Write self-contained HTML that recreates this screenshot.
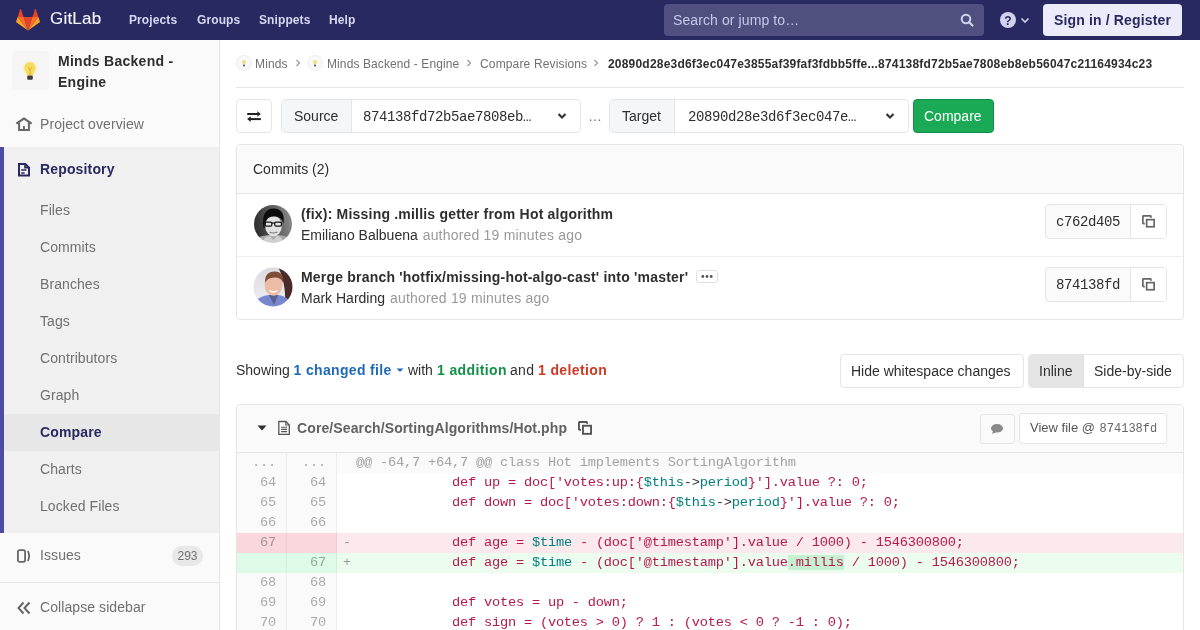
<!DOCTYPE html>
<html><head><meta charset="utf-8">
<style>
*{box-sizing:border-box;margin:0;padding:0}
html,body{width:1200px;height:630px;overflow:hidden;background:#fff}
body{filter:grayscale(0);font-family:"Liberation Sans",sans-serif;font-size:14px;line-height:20px;color:#2e2e2e;position:relative}
.m{font-family:"Liberation Mono",monospace}
.a{position:absolute;white-space:pre}
b,.b{font-weight:bold;letter-spacing:0.15px}
/* header */
#hdr{position:absolute;left:0;top:0;width:1200px;height:40px;background:#292961}
.nav{position:absolute;top:10px;font-weight:bold;color:#d7d7f2;font-size:12px;line-height:20px;letter-spacing:0.1px}
#search{position:absolute;left:664px;top:4px;width:320px;height:32px;background:#4f4f80;border-radius:4px}
#signin{position:absolute;left:1043px;top:4px;width:139px;height:32px;background:#ebebf9;border-radius:4px}
/* sidebar */
#side{position:absolute;left:0;top:40px;width:220px;height:590px;background:#fafafa;border-right:1px solid #e5e5e5}
.si{position:absolute;left:40px;color:#707070;letter-spacing:0.08px}
#repo{position:absolute;left:0;top:147px;width:219px;height:386px;background:#f0f0f0}
#bar{position:absolute;left:0;top:147px;width:4px;height:386px;background:#4b4ba3}
#act{position:absolute;left:4px;top:414px;width:215px;height:37px;background:#e7e7e7}
/* main */
.box{position:absolute;border:1px solid #e5e5e5;border-radius:4px;background:#fff}
.code{position:absolute;left:337px;width:846px;height:20px;font-family:"Liberation Mono",monospace;font-size:13.66px;letter-spacing:-0.2px;line-height:20px;white-space:pre;color:#b5194d}
.ln{position:absolute;width:50px;height:20px;font-family:"Liberation Mono",monospace;font-size:13.66px;letter-spacing:-0.2px;line-height:20px;text-align:right;padding-right:10px;color:rgba(0,0,0,0.33);background:#fafafa;border-right:1px solid rgba(0,0,0,0.05)}
.t{color:#008080}
.o{color:#333}
</style></head><body>
<div id="hdr">
  <svg style="position:absolute;left:16px;top:9px" width="24" height="22" viewBox="0 0 24 22">
    <path d="M12 21.6 L16.4 8 H7.6 Z" fill="#e24329"/>
    <path d="M12 21.6 L7.6 8 H1.6 Z" fill="#fc6d26"/>
    <path d="M1.6 8 L0.2 12.2 c-.15.45 0 .9.4 1.2 L12 21.6 Z" fill="#fca326"/>
    <path d="M1.6 8 H7.6 L5 .3 c-.15-.4-.65-.4-.8 0 Z" fill="#e24329"/>
    <path d="M12 21.6 L16.4 8 H22.4 Z" fill="#fc6d26"/>
    <path d="M22.4 8 L23.8 12.2 c.15.45 0 .9-.4 1.2 L12 21.6 Z" fill="#fca326"/>
    <path d="M22.4 8 H16.4 L19 .3 c.15-.4.65-.4.8 0 Z" fill="#e24329"/>
  </svg>
  <div class="a" style="left:50px;top:7px;font-size:17px;line-height:24px;color:#f5f5fd;-webkit-text-stroke:0.1px #f5f5fd;letter-spacing:0.2px">GitLab</div>
  <div class="nav" style="left:129px">Projects</div>
  <div class="nav" style="left:197px">Groups</div>
  <div class="nav" style="left:259px">Snippets</div>
  <div class="nav" style="left:329px">Help</div>
  <div id="search"></div>
  <div class="a" style="left:673px;top:10px;color:#c8c8e8;letter-spacing:0.1px">Search or jump to…</div>
  <svg style="position:absolute;left:960px;top:13px" width="14" height="14" viewBox="0 0 14 14"><circle cx="6" cy="6" r="4.3" fill="none" stroke="#d1d1f0" stroke-width="2"/><path d="M9 9 L12.5 12.5" stroke="#d1d1f0" stroke-width="2.2" stroke-linecap="round"/></svg>
  <svg style="position:absolute;left:1000px;top:12px" width="32" height="16" viewBox="0 0 32 16"><circle cx="8" cy="8" r="8" fill="#d1d1f0"/><text x="8" y="12.5" font-family="Liberation Sans" font-weight="bold" font-size="12" fill="#292961" text-anchor="middle">?</text><path d="M21.5 6.5 L25 10 L28.5 6.5" fill="none" stroke="#d1d1f0" stroke-width="1.6"/></svg>
  <div id="signin"></div>
  <div class="a b" style="left:1054px;top:10px;color:#292961">Sign in / Register</div>
</div>

<div id="side">
</div>
<!-- sidebar contents (page coordinates) -->
<div class="a" style="left:12px;top:51px;width:37px;height:39px;background:#f5f5f5;border-radius:4px"></div>
<svg style="position:absolute;left:22px;top:60px" width="16" height="22" viewBox="0 0 16 22"><circle cx="8" cy="8.5" r="7.5" fill="#fbf1c4" opacity=".7"/><path d="M8 2.3 C5 2.3 2.3 4.5 2.3 7.8 C2.3 10.8 4.6 12.3 5 15.6 L11 15.6 C11.4 12.3 13.7 10.8 13.7 7.8 C13.7 4.5 11 2.3 8 2.3 Z" fill="#f3dc5e"/><path d="M6 7 L8 10 L10 7 M8 10 V15" stroke="#e2a91c" stroke-width=".9" fill="none"/><rect x="5.2" y="15.6" width="5.6" height="4.2" rx="1.2" fill="#3d3d3d"/></svg>
<div class="a b" style="left:58px;top:51px;line-height:21px;color:#2e2e2e;letter-spacing:0.28px">Minds Backend -
Engine</div>

<svg style="position:absolute;left:12px;top:112px" width="24" height="24" viewBox="0 0 24 24"><path d="M4.3 11.6 L12 6.6 L19.7 11.6" fill="none" stroke="#666" stroke-width="2.1" stroke-linejoin="miter"/><path d="M7.1 10.3 V17.9 H16.9 V10.3" fill="none" stroke="#666" stroke-width="2"/><rect x="11" y="14" width="1.9" height="4" fill="#666"/></svg>
<div class="si" style="top:114px">Project overview</div>

<div id="repo"></div>
<div id="bar"></div>
<svg style="position:absolute;left:12px;top:157px" width="24" height="24" viewBox="0 0 24 24"><path d="M7 7 H13.3 L17 10.7 V18.6 H7 Z" fill="none" stroke="#292961" stroke-width="2"/><path d="M13 7 V10.8 H17" fill="none" stroke="#292961" stroke-width="1.6"/><path d="M9.2 13 H14.4 M9.2 16 H12.6" stroke="#292961" stroke-width="1.6"/></svg>
<div class="a b" style="left:40px;top:159px;color:#292961">Repository</div>
<div class="si" style="top:200px">Files</div>
<div class="si" style="top:237px">Commits</div>
<div class="si" style="top:274px">Branches</div>
<div class="si" style="top:311px">Tags</div>
<div class="si" style="top:348px">Contributors</div>
<div class="si" style="top:385px">Graph</div>
<div id="act"></div>
<div class="a b" style="left:40px;top:422px;color:#292961">Compare</div>
<div class="si" style="top:459px">Charts</div>
<div class="si" style="top:496px">Locked Files</div>

<svg style="position:absolute;left:16px;top:548px" width="16" height="16" viewBox="0 0 16 16"><rect x="1.9" y="2.2" width="7.2" height="11.6" rx="1.8" fill="none" stroke="#666" stroke-width="1.8"/><path d="M11.7 3 C13.6 5.5 13.6 10.5 11.7 13" fill="none" stroke="#666" stroke-width="1.8"/></svg>
<div class="si" style="top:545px">Issues</div>
<div class="a" style="left:172px;top:546px;width:31px;height:20px;border-radius:10px;background:#e8e8e8;color:#707070;font-size:12px;line-height:20px;text-align:center">293</div>
<div class="a" style="left:0;top:582px;width:219px;height:1px;background:#e5e5e5"></div>
<svg style="position:absolute;left:17px;top:601px" width="14" height="14" viewBox="0 0 14 14"><path d="M6.5 1.5 L1.5 7 L6.5 12.5 M12.5 1.5 L7.5 7 L12.5 12.5" fill="none" stroke="#666" stroke-width="2"/></svg>
<div class="si" style="top:597px">Collapse sidebar</div>

<!-- breadcrumbs -->
<svg style="position:absolute;left:236px;top:55px" width="16" height="16" viewBox="0 0 16 16"><circle cx="8" cy="8" r="7.5" fill="#f8f8f8" stroke="#eee"/><path d="M8 5 C6.7 5 5.9 5.9 5.9 6.9 C5.9 7.9 6.8 8.5 7 9.4 H9 C9.2 8.5 10.1 7.9 10.1 6.9 C10.1 5.9 9.3 5 8 5Z" fill="#efe08a"/><rect x="7" y="9.6" width="2" height="1.8" fill="#666"/></svg>
<div class="a" style="left:255px;top:54px;font-size:12px;color:#707070;letter-spacing:0.15px">Minds</div>
<svg style="position:absolute;left:294px;top:58px" width="8" height="10" viewBox="0 0 8 10"><path d="M2.5 2 L5.5 5 L2.5 8" fill="none" stroke="#999" stroke-width="1.2"/></svg>
<svg style="position:absolute;left:307px;top:55px" width="16" height="16" viewBox="0 0 16 16"><circle cx="8" cy="8" r="7.5" fill="#f8f8f8" stroke="#eee"/><path d="M8 5 C6.7 5 5.9 5.9 5.9 6.9 C5.9 7.9 6.8 8.5 7 9.4 H9 C9.2 8.5 10.1 7.9 10.1 6.9 C10.1 5.9 9.3 5 8 5Z" fill="#efe08a"/><rect x="7" y="9.6" width="2" height="1.8" fill="#666"/></svg>
<div class="a" style="left:327px;top:54px;font-size:12px;color:#707070;letter-spacing:0.1px">Minds Backend - Engine</div>
<svg style="position:absolute;left:465px;top:58px" width="8" height="10" viewBox="0 0 8 10"><path d="M2.5 2 L5.5 5 L2.5 8" fill="none" stroke="#999" stroke-width="1.2"/></svg>
<div class="a" style="left:480px;top:54px;font-size:12px;color:#707070;letter-spacing:0.15px">Compare Revisions</div>
<svg style="position:absolute;left:592px;top:58px" width="8" height="10" viewBox="0 0 8 10"><path d="M2.5 2 L5.5 5 L2.5 8" fill="none" stroke="#999" stroke-width="1.2"/></svg>
<div class="a" style="left:608px;top:54px;font-size:12px;font-weight:bold;color:#2e2e2e;letter-spacing:0.2px">20890d28e3d6f3ec047e3855af39faf3fdbb5ffe...874138fd72b5ae7808eb8eb56047c21164934c23</div>
<div class="a" style="left:236px;top:87px;width:948px;height:1px;background:#e5e5e5"></div>

<!-- compare form -->
<div class="box" style="left:236px;top:99px;width:36px;height:34px"></div>
<svg style="position:absolute;left:246px;top:110px" width="16" height="14" viewBox="0 0 16 14"><path d="M1.2 4 H12.5" stroke="#222" stroke-width="2"/><path d="M11.3 1.2 L14.9 4 L11.3 6.8 Z" fill="#222"/><path d="M3.5 9.1 H14.9" stroke="#222" stroke-width="2"/><path d="M4.7 6.3 L1.1 9.1 L4.7 11.9 Z" fill="#222"/></svg>

<div class="box" style="left:281px;top:99px;width:300px;height:34px"></div>
<div class="a" style="left:282px;top:100px;width:70px;height:32px;background:#f5f6f8;border-right:1px solid #e5e5e5;border-radius:3px 0 0 3px"></div>
<div class="a" style="left:294px;top:106px">Source</div>
<div class="a m" style="left:363px;top:107px;font-size:14px;letter-spacing:-0.4px">874138fd72b5ae7808eb…</div>
<svg style="position:absolute;left:556px;top:111px" width="12" height="10" viewBox="0 0 12 10"><path d="M2.5 3 L6 6.5 L9.5 3" fill="none" stroke="#2e2e2e" stroke-width="2"/></svg>
<div class="a" style="left:588px;top:106px;color:#707070">…</div>

<div class="box" style="left:609px;top:99px;width:300px;height:34px"></div>
<div class="a" style="left:610px;top:100px;width:65px;height:32px;background:#f5f6f8;border-right:1px solid #e5e5e5;border-radius:3px 0 0 3px"></div>
<div class="a" style="left:622px;top:106px">Target</div>
<div class="a m" style="left:688px;top:107px;font-size:14px;letter-spacing:-0.4px">20890d28e3d6f3ec047e…</div>
<svg style="position:absolute;left:884px;top:111px" width="12" height="10" viewBox="0 0 12 10"><path d="M2.5 3 L6 6.5 L9.5 3" fill="none" stroke="#2e2e2e" stroke-width="2"/></svg>

<div class="a" style="left:913px;top:99px;width:81px;height:34px;background:#1aaa55;border:1px solid #168f48;border-radius:4px"></div>
<div class="a" style="left:924px;top:106px;color:#fff">Compare</div>

<!-- commits panel -->
<div class="box" style="left:236px;top:144px;width:948px;height:176px;overflow:hidden">
  <div style="position:absolute;left:0;top:0;width:946px;height:49px;background:#fafafa;border-bottom:1px solid #e5e5e5"></div>
  <div style="position:absolute;left:0;top:111px;width:946px;height:1px;background:#f0f0f0"></div>
</div>
<div class="a" style="left:253px;top:159px">Commits (2)</div>

<svg style="position:absolute;left:254px;top:205px" width="38" height="38" viewBox="0 0 38 38">
  <defs><clipPath id="c1"><circle cx="19" cy="19" r="19"/></clipPath>
  <linearGradient id="g1" x1="0" y1="0.2" x2="1" y2="0"><stop offset="0" stop-color="#2e2e2e"/><stop offset="0.45" stop-color="#5a5a5a"/><stop offset="1" stop-color="#9a9a9a"/></linearGradient>
  <filter id="bl1" x="-10%" y="-10%" width="120%" height="120%"><feGaussianBlur stdDeviation="0.45"/></filter></defs>
  <g clip-path="url(#c1)"><g filter="url(#bl1)">
    <rect x="-2" y="-2" width="42" height="42" fill="url(#g1)"/>
    <path d="M-2 40 C1 32 8 30 19 30 C30 30 37 31 40 40 Z" fill="#a8a8a8"/>
    <path d="M8 40 C9 34 12 31 16 31 L19 35 L23 31 C26 31 29 33 30 40 Z" fill="#cfcfcf"/>
    <ellipse cx="19.5" cy="21" rx="8.3" ry="10.3" fill="#e2e2e2"/>
    <path d="M9.5 23 C7.5 10 11.5 3.5 19.5 3.5 C27.5 3.5 31 9 29.5 19 C28.5 14 26 11.5 19.5 11.5 C13.5 11.5 11 15 10.5 23 Z" fill="#111"/>
    <rect x="11.2" y="17" width="6.6" height="4.2" rx="1.2" fill="none" stroke="#151515" stroke-width="1.25"/>
    <rect x="20.8" y="17" width="6.6" height="4.2" rx="1.2" fill="none" stroke="#151515" stroke-width="1.25"/>
    <path d="M18 18 H20.8" stroke="#151515" stroke-width="1.3"/>
    <path d="M15.5 27 Q19.5 29 23.5 27" fill="none" stroke="#7a7a7a" stroke-width="1.1"/>
  </g></g>
</svg>
<div class="a b" style="left:301px;top:204px;letter-spacing:0.2px">(fix): Missing .millis getter from Hot algorithm</div>
<div class="a" style="left:301px;top:225px">Emiliano Balbuena <span style="color:#999;letter-spacing:0.2px;margin-left:1px">authored 19 minutes ago</span></div>

<svg style="position:absolute;left:253px;top:267px" width="40" height="40" viewBox="0 0 40 40">
  <defs><clipPath id="c2"><circle cx="20" cy="20" r="19.5"/></clipPath>
  <linearGradient id="g2" x1="0" y1="0" x2="0" y2="1"><stop offset="0" stop-color="#d9d9de"/><stop offset="1" stop-color="#f2f2f5"/></linearGradient>
  <filter id="bl2" x="-10%" y="-10%" width="120%" height="120%"><feGaussianBlur stdDeviation="0.5"/></filter></defs>
  <g clip-path="url(#c2)"><g filter="url(#bl2)">
    <rect x="-2" y="-2" width="44" height="44" fill="url(#g2)"/>
    <path d="M24 -2 H42 V36 H32 C33 24 30 8 24 -2 Z" fill="#4d2a2c"/>
    <path d="M0 42 C1 33 7 28 20 27.5 C32 28 37 31 39 42 Z" fill="#7888cf"/>
    <path d="M16 28 L21 38 L25 28 Z" fill="#55608f"/>
    <ellipse cx="20.5" cy="18.5" rx="9" ry="10.2" fill="#ebbca6"/>
    <path d="M12.2 16 C11.5 8 15.5 4.5 21.5 4.5 C28 4.5 31 8.5 30 16 C28.5 11.5 25 10.5 21.5 10.5 C17 10.7 14 12 12.2 16 Z" fill="#7f4d38"/>
    <path d="M16.5 23.5 Q20.5 26.5 24.5 23.5" fill="none" stroke="#fff" stroke-width="1.3"/>
  </g></g>
</svg>
<div class="a b" style="left:301px;top:267px;letter-spacing:0.2px">Merge branch 'hotfix/missing-hot-algo-cast' into 'master'</div>
<div class="a" style="left:696px;top:270px;width:22px;height:13px;border:1px solid #dfdfdf;border-radius:3px;background:#fff"></div>
<svg style="position:absolute;left:700px;top:274px" width="14" height="5" viewBox="0 0 14 5"><circle cx="2.8" cy="2.5" r="1.4" fill="#555"/><circle cx="7" cy="2.5" r="1.4" fill="#555"/><circle cx="11.2" cy="2.5" r="1.4" fill="#555"/></svg>
<div class="a" style="left:301px;top:288px">Mark Harding <span style="color:#999;letter-spacing:0.2px;margin-left:1px">authored 19 minutes ago</span></div>

<!-- sha buttons -->
<div class="a" style="left:1045px;top:204px;width:122px;height:35px;border:1px solid #e5e5e5;border-radius:4px;background:#fafafa"></div>
<div class="a" style="left:1130px;top:205px;width:36px;height:33px;background:#fff;border-left:1px solid #e5e5e5;border-radius:0 3px 3px 0"></div>
<div class="a m" style="left:1056px;top:212px;font-size:14px;letter-spacing:-0.4px">c762d405</div>
<svg style="position:absolute;left:1139.80px;top:213.20px" width="20" height="20" viewBox="0 0 20 20"><rect x="2.85" y="2.85" width="8.10" height="7.70" rx="0.6" fill="none" stroke="#666" stroke-width="1.7"/><rect x="4.80" y="4.80" width="11.20" height="10.80" fill="#fff"/><rect x="6.65" y="6.65" width="7.50" height="7.10" fill="none" stroke="#666" stroke-width="1.7"/></svg>
<div class="a" style="left:1045px;top:267px;width:122px;height:35px;border:1px solid #e5e5e5;border-radius:4px;background:#fafafa"></div>
<div class="a" style="left:1130px;top:268px;width:36px;height:33px;background:#fff;border-left:1px solid #e5e5e5;border-radius:0 3px 3px 0"></div>
<div class="a m" style="left:1056px;top:275px;font-size:14px;letter-spacing:-0.4px">874138fd</div>
<svg style="position:absolute;left:1139.80px;top:276.20px" width="20" height="20" viewBox="0 0 20 20"><rect x="2.85" y="2.85" width="8.10" height="7.70" rx="0.6" fill="none" stroke="#666" stroke-width="1.7"/><rect x="4.80" y="4.80" width="11.20" height="10.80" fill="#fff"/><rect x="6.65" y="6.65" width="7.50" height="7.10" fill="none" stroke="#666" stroke-width="1.7"/></svg>

<!-- showing -->
<div class="a" style="left:236px;top:360px">Showing <span class="b" style="color:#1e6ab9;letter-spacing:0.33px">1 changed file</span></div>
<svg style="position:absolute;left:395px;top:366px" width="10" height="8" viewBox="0 0 10 8"><path d="M1.5 2.5 H8.5 L5 6 Z" fill="#1e6ab9"/></svg>
<div class="a" style="left:408px;top:360px">with</div>
<div class="a b" style="left:437px;top:360px;color:#168f48;letter-spacing:0.38px">1 addition</div>
<div class="a" style="left:510px;top:360px;letter-spacing:0.3px">and</div>
<div class="a b" style="left:538px;top:360px;color:#cf3a24;letter-spacing:0.38px">1 deletion</div>

<div class="box" style="left:840px;top:354px;width:184px;height:34px"></div>
<div class="a" style="left:851px;top:361px">Hide whitespace changes</div>
<div class="box" style="left:1028px;top:354px;width:156px;height:34px;overflow:hidden"><div style="position:absolute;left:0;top:0;width:55px;height:32px;background:#e5e5e5;border-right:1px solid #e0e0e0"></div></div>
<div class="a" style="left:1039px;top:361px">Inline</div>
<div class="a" style="left:1094px;top:361px">Side-by-side</div>

<!-- diff file -->
<div class="box" style="left:236px;top:404px;width:948px;height:240px;overflow:hidden">
  <div style="position:absolute;left:0;top:0;width:946px;height:48px;background:#fafafa;border-bottom:1px solid #e5e5e5"></div>
</div>
<svg style="position:absolute;left:256px;top:423px" width="12" height="10" viewBox="0 0 12 10"><path d="M1.5 2.5 H10.5 L6 7.5 Z" fill="#2e2e2e"/></svg>
<svg style="position:absolute;left:276px;top:419px" width="16" height="18" viewBox="0 0 16 18"><path d="M2.8 2.5 H9.8 L13.3 6 V15.3 H2.8 Z" fill="none" stroke="#555" stroke-width="1.3"/><path d="M9.8 2.5 V6 H13.3" fill="none" stroke="#555" stroke-width="1.1"/><path d="M5.1 8.2 H11.1 M5.1 10.4 H11.1 M5.1 12.6 H11.1" stroke="#555" stroke-width="1.1"/></svg>
<div class="a b" style="left:297px;top:418px;color:#626262;letter-spacing:0.11px">Core/Search/SortingAlgorithms/Hot.php</div>
<svg style="position:absolute;left:576.00px;top:419.10px" width="20" height="20" viewBox="0 0 20 20"><rect x="2.95" y="2.95" width="8.10" height="7.90" rx="0.6" fill="none" stroke="#555" stroke-width="1.9"/><rect x="5.00" y="4.80" width="12.00" height="12.00" fill="#fafafa"/><rect x="6.95" y="6.75" width="8.10" height="8.10" fill="none" stroke="#555" stroke-width="1.9"/></svg>

<div class="a" style="left:980px;top:414px;width:35px;height:30px;border:1px solid #e5e5e5;border-radius:3px;background:#fafafa"></div>
<svg style="position:absolute;left:989px;top:421px" width="16" height="16" viewBox="0 0 16 16"><ellipse cx="8" cy="7.3" rx="6" ry="4.3" fill="#8a8a8a"/><path d="M4 10 L3.2 13 L7.5 11 Z" fill="#8a8a8a"/></svg>
<div class="a" style="left:1019px;top:413px;width:148px;height:31px;border:1px solid #e5e5e5;border-radius:3px;background:#fff"></div>
<div class="a" style="left:1030px;top:418px;font-size:13px;color:#555">View file @ <span class="m" style="font-size:12px;color:#666;margin-left:1px">874138fd</span></div>

<!-- diff lines -->
<div class="a" style="left:237px;top:453px;width:946px;height:177px;overflow:hidden">
<div class="ln" style="left:0;top:0px;background:#fafafa">...</div>
<div class="ln" style="left:50px;top:0px;background:#fafafa">...</div>
<div class="code" style="left:100px;top:0px;background:#fafafa;color:#a3a3a3;padding-left:19px">@@ -64,7 +64,7 @@ class Hot implements SortingAlgorithm</div>
<div class="ln" style="left:0;top:20px;background:#fafafa">64</div>
<div class="ln" style="left:50px;top:20px;background:#fafafa">64</div>
<div class="code" style="left:100px;top:20px;background:#fff;padding-left:19px">            def up = doc['votes:up:{<span class="t">$this</span><span class="o">-&gt;</span><span class="t">period</span>}'].value ?: 0;</div>
<div class="ln" style="left:0;top:40px;background:#fafafa">65</div>
<div class="ln" style="left:50px;top:40px;background:#fafafa">65</div>
<div class="code" style="left:100px;top:40px;background:#fff;padding-left:19px">            def down = doc['votes:down:{<span class="t">$this</span><span class="o">-&gt;</span><span class="t">period</span>}'].value ?: 0;</div>
<div class="ln" style="left:0;top:60px;background:#fafafa">66</div>
<div class="ln" style="left:50px;top:60px;background:#fafafa">66</div>
<div class="code" style="left:100px;top:60px;background:#fff;padding-left:19px"></div>
<div class="ln" style="left:0;top:80px;background:#f9d7dc">67</div>
<div class="ln" style="left:50px;top:80px;background:#f9d7dc"></div>
<div class="code" style="left:100px;top:80px;background:#fbe9eb;padding-left:19px">            def age = <span class="t">$time</span> - (doc['@timestamp'].value / 1000) - 1546300800;</div>
<div class="a m" style="left:106px;top:80px;font-size:13.33px;color:#999">-</div>
<div class="ln" style="left:0;top:100px;background:#ddfbe6"></div>
<div class="ln" style="left:50px;top:100px;background:#ddfbe6">67</div>
<div class="code" style="left:100px;top:100px;background:#ecfdf0;padding-left:19px">            def age = <span class="t">$time</span> - (doc['@timestamp'].value<span style="background:#c7f0d2">.millis</span> / 1000) - 1546300800;</div>
<div class="a m" style="left:106px;top:100px;font-size:13.33px;color:#999">+</div>
<div class="ln" style="left:0;top:120px;background:#fafafa">68</div>
<div class="ln" style="left:50px;top:120px;background:#fafafa">68</div>
<div class="code" style="left:100px;top:120px;background:#fff;padding-left:19px"></div>
<div class="ln" style="left:0;top:140px;background:#fafafa">69</div>
<div class="ln" style="left:50px;top:140px;background:#fafafa">69</div>
<div class="code" style="left:100px;top:140px;background:#fff;padding-left:19px">            def votes = up - down;</div>
<div class="ln" style="left:0;top:160px;background:#fafafa">70</div>
<div class="ln" style="left:50px;top:160px;background:#fafafa">70</div>
<div class="code" style="left:100px;top:160px;background:#fff;padding-left:19px">            def sign = (votes &gt; 0) ? 1 : (votes &lt; 0 ? -1 : 0);</div>
</div>
</body></html>
